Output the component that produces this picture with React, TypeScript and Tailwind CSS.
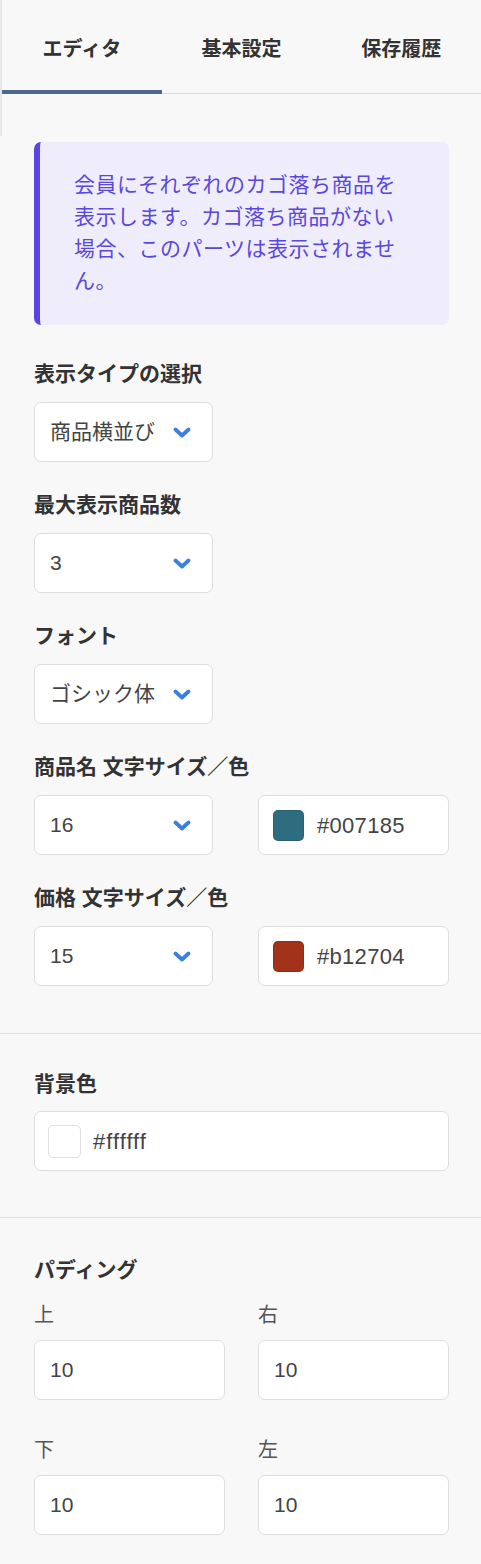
const FONT = "font-['Liberation_Sans','Noto_Sans_CJK_JP',sans-serif]";

function Chevron() {
  return (
    <svg width="18" height="11" viewBox="0 0 18 11" fill="none" aria-hidden="true">
      <polyline
        points="2.5,2.5 9,8.5 15.5,2.5"
        stroke="#3d7fe0"
        strokeWidth="3.8"
        strokeLinecap="round"
        strokeLinejoin="round"
      />
    </svg>
  );
}

function Label({ children }: { children: React.ReactNode }) {
  return <p className="text-[21px] font-bold leading-[32px] text-[#333]">{children}</p>;
}

function Select({ value }: { value: string }) {
  return (
    <div className="mt-[12px] flex h-[60px] w-[179px] items-center justify-between rounded-[7px] border border-[#dedede] bg-white pl-[15px] pr-[21px] text-[21px] text-[#444]">
      <span>{value}</span>
      <Chevron />
    </div>
  );
}

function ColorInput({ color, value }: { color: string; value: string }) {
  return (
    <div className="flex h-[60px] items-center rounded-[7px] border border-[#dedede] bg-white pl-[14px] text-[22px] text-[#444]">
      <span className="h-[31px] w-[31px] rounded-[5px] border border-black/10" style={{ backgroundColor: color }} />
      <span className="ml-[13px] tracking-[0.3px]">{value}</span>
    </div>
  );
}

function NumberField({ label, value }: { label: string; value: string }) {
  return (
    <div>
      <p className="text-[20px] leading-[32px] text-[#555]">{label}</p>
      <div className="mt-[9px] flex h-[60px] items-center rounded-[7px] border border-[#dedede] bg-white pl-[15px] text-[21px] text-[#444]">
        {value}
      </div>
    </div>
  );
}

export default function App() {
  const tabs = ["エディタ", "基本設定", "保存履歴"];

  return (
    <div className={`min-h-[1564px] w-full bg-[#f8f8f8] ${FONT}`}>
      {/* タブ */}
      <div className="h-[136px] border-l-2 border-[#e6e6e6]">
        <div className="flex border-b border-[#dcdcdc]">
          {tabs.map((t, i) => (
            <button
              key={t}
              type="button"
              className="relative flex h-[93px] flex-1 items-center justify-center pt-[5px] text-[20px] font-bold text-[#333]"
            >
              {t}
              {i === 0 && <span className="absolute bottom-[-1px] left-0 right-0 h-[4px] bg-[#4a6890]" />}
            </button>
          ))}
        </div>
      </div>

      {/* 表示設定 */}
      <div className="border-b border-[#e2e2e2] pb-[47px] pl-[34px] pr-[32px] pt-[6px]">
        <div className="rounded-[7px] border-l-[6px] border-[#5a45e0] bg-[#efedfb] pb-[28px] pl-[34px] pr-[40px] pt-[27px] text-[21px] leading-[32px] tracking-[0.5px] text-[#5a48dd]">
          会員にそれぞれのカゴ落ち商品を表示します。カゴ落ち商品がない場合、このパーツは表示されません。
        </div>

        <div className="mt-[33px]">
          <Label>表示タイプの選択</Label>
          <Select value="商品横並び" />
        </div>
        <div className="mt-[27px]">
          <Label>最大表示商品数</Label>
          <Select value="3" />
        </div>
        <div className="mt-[27px]">
          <Label>フォント</Label>
          <Select value="ゴシック体" />
        </div>
        <div className="mt-[27px]">
          <Label>商品名 文字サイズ／色</Label>
          <div className="grid grid-cols-2 items-end gap-x-[33px]">
            <Select value="16" />
            <ColorInput color="#2e6d80" value="#007185" />
          </div>
        </div>
        <div className="mt-[27px]">
          <Label>価格 文字サイズ／色</Label>
          <div className="grid grid-cols-2 items-end gap-x-[33px]">
            <Select value="15" />
            <ColorInput color="#a3321a" value="#b12704" />
          </div>
        </div>
      </div>

      {/* 背景色 */}
      <div className="border-b border-[#e2e2e2] pb-[46px] pl-[34px] pr-[32px] pt-[34px]">
        <Label>背景色</Label>
        <div className="mt-[11px] flex h-[60px] items-center rounded-[7px] border border-[#dedede] bg-white pl-[13px] text-[22px] text-[#444]">
          <span className="h-[33px] w-[33px] rounded-[5px] border border-[#e0e0e0] bg-white" />
          <span className="ml-[12px] tracking-[1px]">#ffffff</span>
        </div>
      </div>

      {/* パディング */}
      <div className="pb-[28px] pl-[34px] pr-[32px] pt-[36px]">
        <Label>パディング</Label>
        <div className="mt-[13px] grid grid-cols-2 gap-x-[33px] gap-y-[34px]">
          <NumberField label="上" value="10" />
          <NumberField label="右" value="10" />
          <NumberField label="下" value="10" />
          <NumberField label="左" value="10" />
        </div>
      </div>
    </div>
  );
}
